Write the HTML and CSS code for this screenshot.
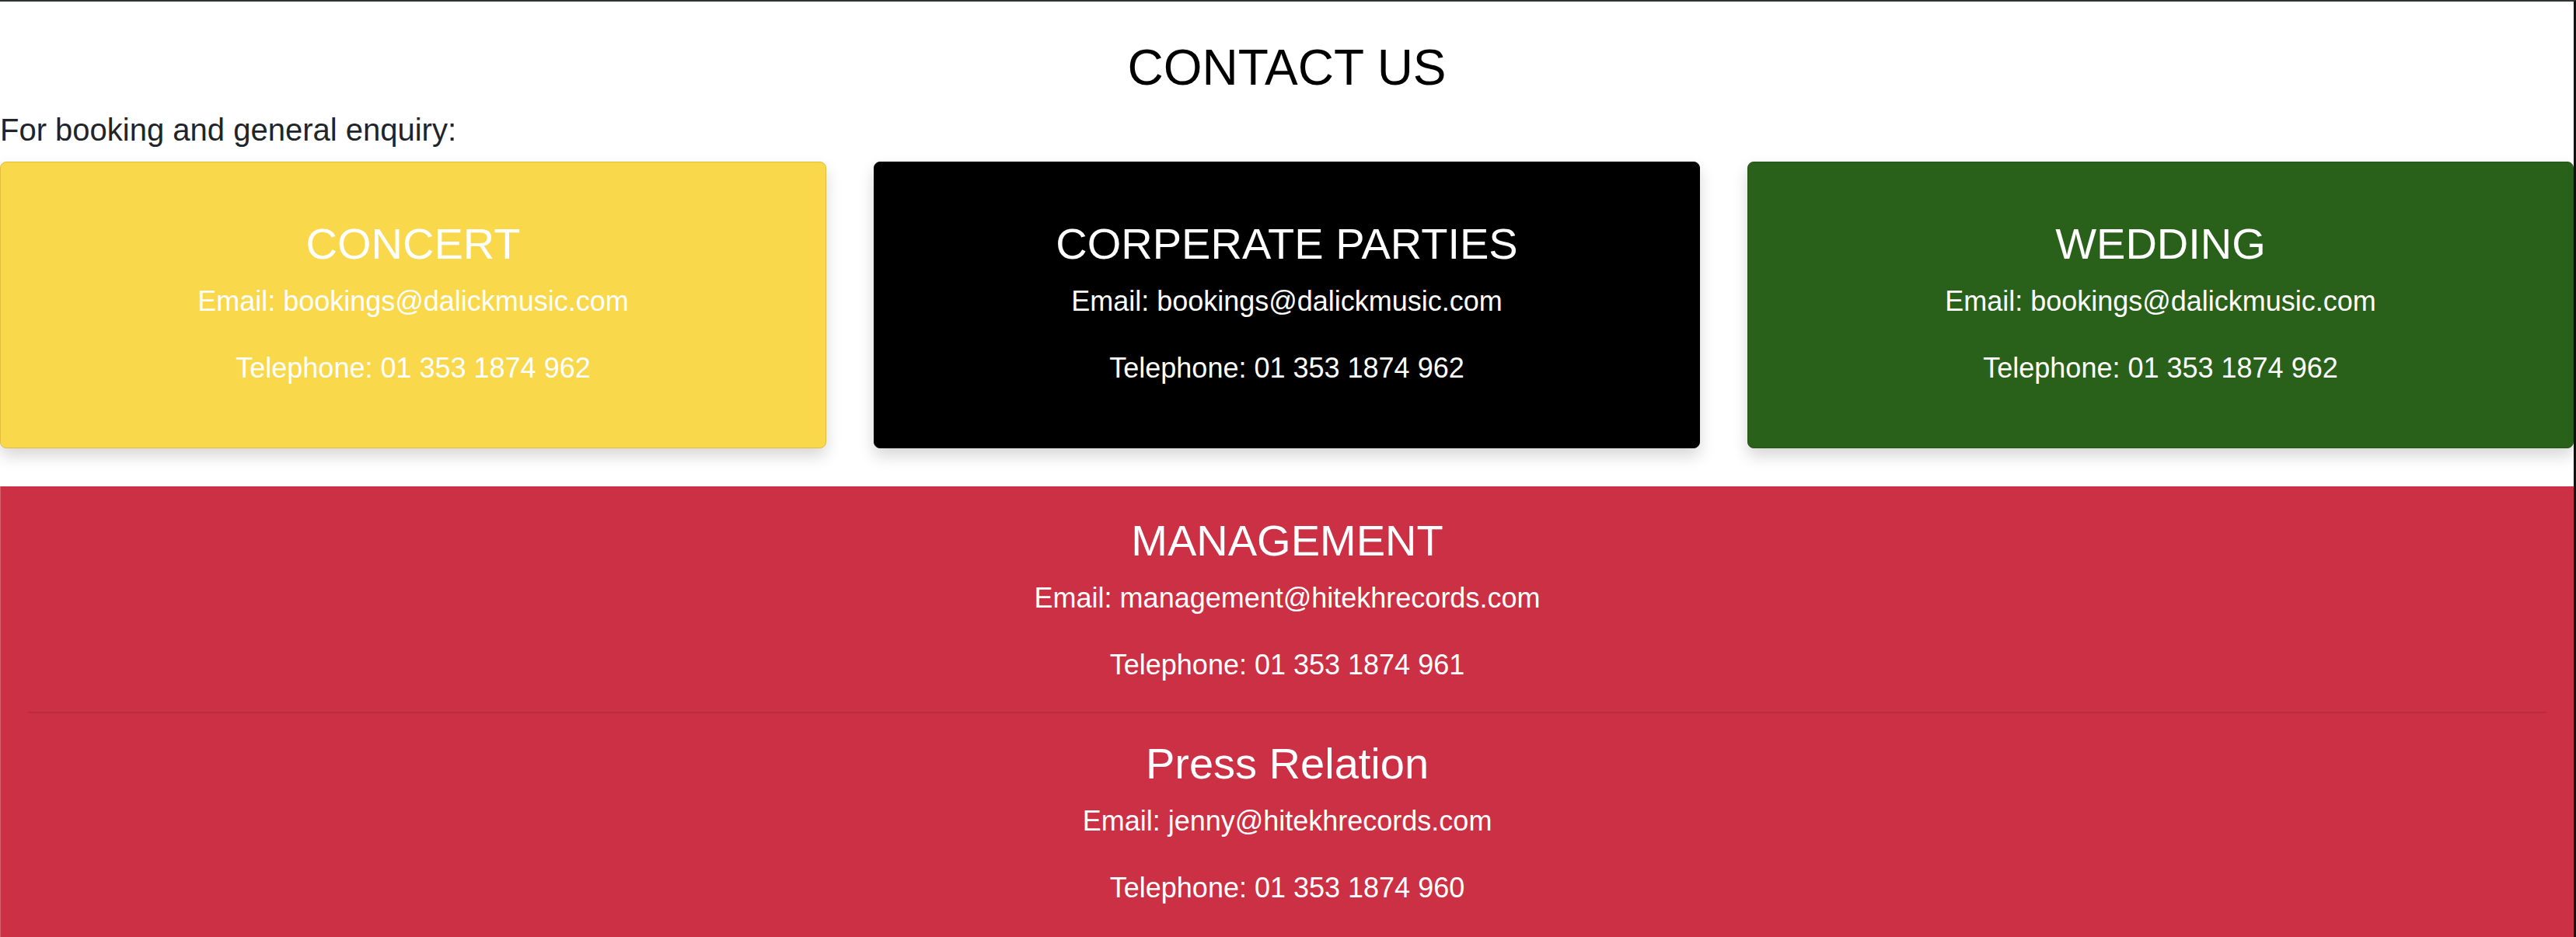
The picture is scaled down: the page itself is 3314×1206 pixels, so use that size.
FILE: index.html
```html
<!DOCTYPE html>
<html lang="en">
<head>
<meta charset="utf-8">
<title>Contact Us</title>
<link rel="stylesheet" href="styles.css">
</head>
<body>
<div class="page">
  <h1 class="title">CONTACT US</h1>
  <p class="intro">For booking and general enquiry:</p>
  <div class="cards">
    <div class="card card-yellow">
      <h3 class="card-title">CONCERT</h3>
      <p class="line">Email: bookings@dalickmusic.com</p>
      <p class="line">Telephone: 01 353 1874 962</p>
    </div>
    <div class="card card-black">
      <h3 class="card-title">CORPERATE PARTIES</h3>
      <p class="line">Email: bookings@dalickmusic.com</p>
      <p class="line">Telephone: 01 353 1874 962</p>
    </div>
    <div class="card card-green">
      <h3 class="card-title">WEDDING</h3>
      <p class="line">Email: bookings@dalickmusic.com</p>
      <p class="line">Telephone: 01 353 1874 962</p>
    </div>
  </div>
  <section class="red-panel">
    <div class="block">
      <h3 class="card-title">MANAGEMENT</h3>
      <p class="line">Email: management@hitekhrecords.com</p>
      <p class="line">Telephone: 01 353 1874 961</p>
    </div>
    <hr class="divider">
    <div class="block">
      <h3 class="card-title">Press Relation</h3>
      <p class="line">Email: jenny@hitekhrecords.com</p>
      <p class="line">Telephone: 01 353 1874 960</p>
    </div>
  </section>
</div>
</body>
</html>
```

FILE: styles.css
```css
html, body {
  margin: 0;
  padding: 0;
  background: #ffffff;
}

body {
  font-family: "Liberation Sans", Arial, Helvetica, sans-serif;
  color: #212529;
  overflow: hidden;
}

.page {
  display: flex;
  flex-direction: column;
  height: 100vh;
  box-sizing: border-box;
  border-top: 2px solid #2f3337;
  border-right: 3px solid #111111;
}

.title {
  margin: 47px 0 0;
  font-size: 64px;
  font-weight: 400;
  line-height: 1.2;
  text-align: center;
  color: #000000;
}

.intro {
  margin: 11px 0 0;
  font-size: 40px;
  line-height: 60px;
  color: #212529;
}

.cards {
  display: flex;
  gap: 61px;
  margin-top: 11px;
}

.card {
  flex: 1 1 0;
  border: 1px solid rgba(0, 0, 0, 0.1);
  border-radius: 8px;
  padding: 71px 30px 43px;
  text-align: center;
  color: #ffffff;
  box-shadow: 0 10px 20px rgba(0, 0, 0, 0.16);
}

.card-yellow {
  background: #f9d84c;
  border-color: #e2bf3a;
}

.card-black {
  background: #000000;
  border-color: #000000;
}

.card-green {
  background: #2a611a;
  border-color: #245516;
}

.card-title {
  margin: 0 0 14px;
  font-size: 56px;
  font-weight: 400;
  line-height: 1.2;
  color: #ffffff;
}

.line {
  margin: 0 0 32px;
  font-size: 36px;
  line-height: 54px;
  color: #ffffff;
}

.red-panel {
  flex: 1 1 auto;
  min-height: 0;
  margin-top: 49px;
  background: #cc3044;
  border-left: 1px solid #d8616f;
  padding-top: 36px;
  text-align: center;
  color: #ffffff;
}

.block .line:last-child {
  margin-bottom: 0;
}

.divider {
  margin: 33px 35px 31px;
  border: 0;
  border-top: 2px solid #b92b3d;
  height: 0;
}
```
